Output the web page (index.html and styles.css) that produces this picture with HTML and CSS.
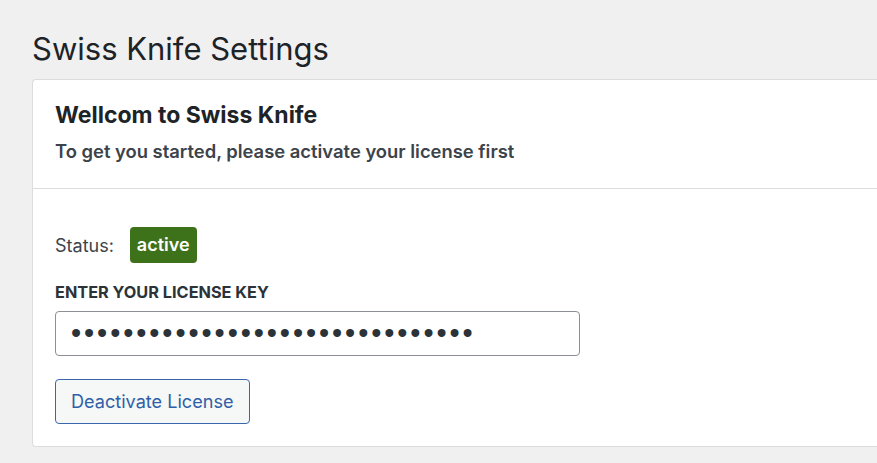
FILE: index.html
```html
<!DOCTYPE html>
<html>
<head>
<meta charset="utf-8">
<link rel="stylesheet" href="styles.css">
</head>
<body>
<div class="wrap">
  <h1 class="page-title">Swiss Knife Settings</h1>
  <div class="card">
    <div class="card-head">
      <h2 class="card-title">Wellcom to Swiss Knife</h2>
      <p class="card-sub">To get you started, please activate your license first</p>
    </div>
    <div class="card-body">
      <div class="status-row">
        <span class="status-label">Status:</span>
        <span class="badge">active</span>
      </div>
      <label class="field-label" for="key">ENTER YOUR LICENSE KEY</label>
      <input class="key-input" id="key" type="password" value="xxxxxxxxxxxxxxxxxxxxxxxxxxxxxxx">
      <button class="btn" type="button">Deactivate License</button>
    </div>
  </div>
</div>
</body>
</html>
```
FILE: styles.css
```css
html, body {
  margin: 0;
  padding: 0;
  background: #f0f0f1;
  font-family: Inter, "Liberation Sans", sans-serif;
  color: #1d2327;
  overflow: hidden;
}
.wrap {
  padding: 30px 0 0 32px;
}
.page-title {
  margin: 0 0 11px 0;
  font-size: 31px;
  font-weight: 400;
  line-height: 38px;
  color: #1d2327;
}
.card {
  background: #fff;
  border: 1px solid #dcdcde;
  border-right: none;
  border-radius: 4px 0 0 4px;
  width: 900px;
  box-sizing: border-box;
}
.card-head {
  padding: 20px 22px 25px 22px;
  border-bottom: 1px solid #dcdcde;
}
.card-title {
  margin: 0;
  font-size: 23px;
  font-weight: 700;
  line-height: 30px;
}
.card-sub {
  margin: 9px 0 0 0;
  font-size: 18.4px;
  font-weight: 600;
  line-height: 24px;
  color: #3c434a;
}
.card-body {
  padding: 38px 22px 22px 22px;
  display: flex;
  flex-direction: column;
  align-items: flex-start;
}
.status-row {
  display: flex;
  align-items: center;
  gap: 16px;
}
.status-label {
  font-size: 18px;
  color: #3c434a;
}
.badge {
  background: #3e721a;
  color: #fff;
  font-size: 18px;
  font-weight: 600;
  line-height: 36px;
  padding: 0 7px;
  border-radius: 4px;
}
.field-label {
  margin-top: 18px;
  font-size: 16.3px;
  font-weight: 700;
  color: #2c3338;
  line-height: 22px;
}
.key-input {
  margin-top: 8px;
  width: 525px;
  height: 45px;
  box-sizing: border-box;
  border: 1px solid #8c8f94;
  border-radius: 4px;
  padding: 0 15px;
  font-size: 29px;
  font-family: "Liberation Sans", sans-serif;
  color: #2c3338;
  letter-spacing: 2.9px;
  background: #fff;
}
.btn {
  margin-top: 23px;
  height: 45px;
  padding: 0 15px;
  border: 1px solid #3a67ab;
  border-radius: 4px;
  background: #f6f7f7;
  color: #2f5fa6;
  font-family: Inter, "Liberation Sans", sans-serif;
  font-size: 18.1px;
  line-height: 43px;
}
```
